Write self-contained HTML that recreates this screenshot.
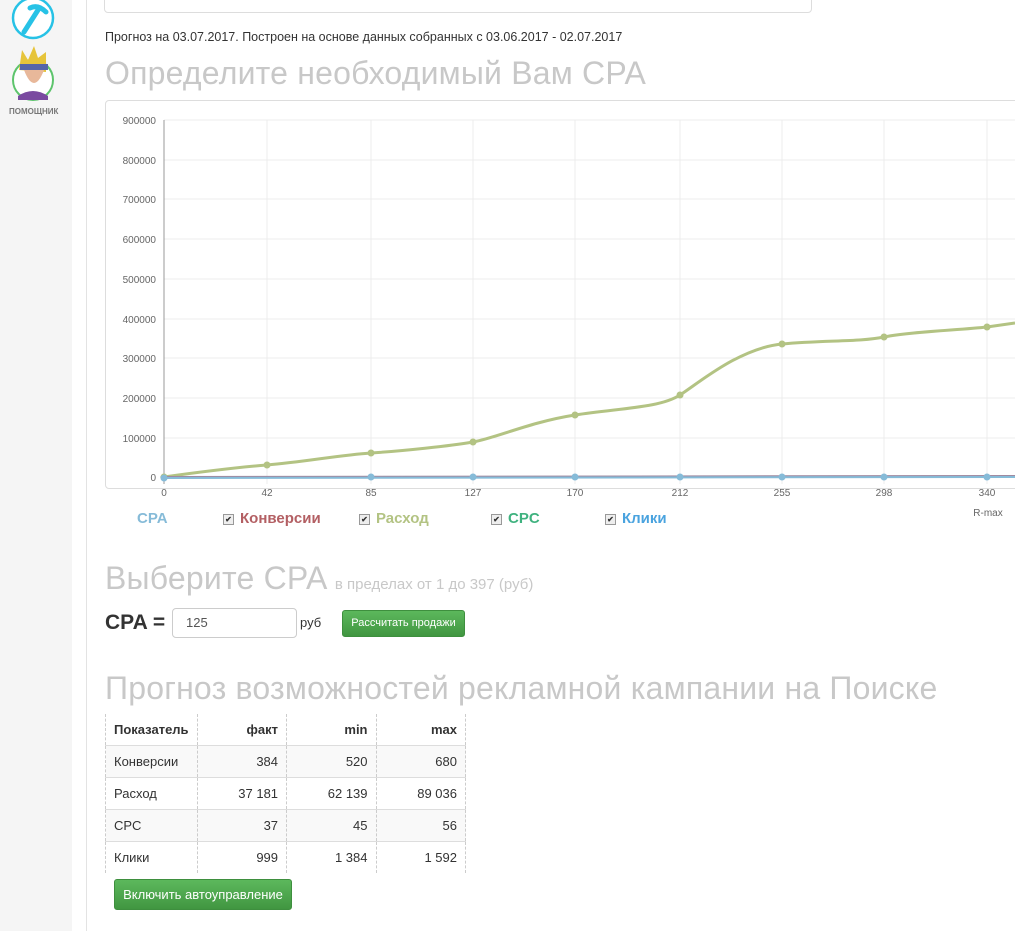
<!DOCTYPE html>
<html><head><meta charset="utf-8"><style>
body{margin:0;width:1015px;height:931px;overflow:hidden;background:#fff;font-family:"Liberation Sans",sans-serif;position:relative}
.sb{position:absolute;left:0;top:0;width:72px;height:931px;background:#f5f5f5}
.vl{position:absolute;left:86px;top:0;width:1px;height:931px;background:#e3e3e3}
.a{position:absolute}
h2{position:absolute;margin:0;font-weight:normal;color:#c8c8c8;white-space:nowrap;letter-spacing:0.2px}
table{border-collapse:collapse;font-size:13px;color:#333}
td,th{height:31px;padding:0 8px;border-left:1px dashed #ccc;border-right:1px dashed #ccc;border-top:1px solid #ddd;text-align:right}
th{border-top:none;height:31px}
td:first-child,th:first-child{text-align:left}
tr:nth-child(even) td{background:#f9f9f9}
.btn{position:absolute;background:linear-gradient(#5cb85c,#419641);border:1px solid #3e8f3e;border-radius:3px;color:#fff;text-align:center}
.cb{display:inline-block;width:9px;height:9px;border:1px solid #999;background:#eee;font-size:8px;line-height:9px;text-align:center;color:#333;vertical-align:1px;margin-right:6px}
</style></head><body>
<div class="sb"></div><div class="vl"></div>
<svg class="a" style="left:10px;top:0" width="50" height="120">
<circle cx="23" cy="18" r="20" fill="#fff" stroke="#27c2e6" stroke-width="2.5"/>
<path d="M14 32 L28 10" stroke="#27c2e6" stroke-width="5" stroke-linecap="round"/>
<path d="M20 8 Q28 4 36 12" stroke="#27c2e6" stroke-width="5" fill="none" stroke-linecap="round"/>
<circle cx="23" cy="80" r="20" fill="#fff" stroke="#5dc46c" stroke-width="2"/>
<path d="M9 70 L12 50 L18 60 L24 46 L28 58 L36 52 L36 72 Z" fill="#e6c43a"/>
<rect x="10" y="64" width="28" height="6" fill="#5565a8"/>
<path d="M14 70 Q24 96 34 70 Z" fill="#e8b89a"/>
<path d="M8 96 Q23 86 38 96 L38 100 L8 100Z" fill="#7a4aa0"/>
</svg>
<div class="a" style="left:9px;top:107px;font-size:8px;font-weight:bold;color:#777">ПОМОЩНИК</div>
<div class="a" style="left:104px;top:-5px;width:706px;height:16px;border:1px solid #ddd;border-radius:4px"></div>
<div class="a" style="left:105px;top:30px;font-size:12.5px;color:#333">Прогноз на 03.07.2017. Построен на основе данных собранных с 03.06.2017 - 02.07.2017</div>
<h2 style="left:105px;top:55px;font-size:32px">Определите необходимый Вам CPA</h2>
<div class="a" style="left:105px;top:100px;width:920px;height:387px;border:1px solid #ddd;border-radius:4px"></div>
<svg class="a" style="left:100px;top:100px" width="915" height="420" font-family="Liberation Sans" font-size="10" fill="#666">
<g stroke="#ececec">
<line x1="64" y1="20" x2="915" y2="20"/><line x1="64" y1="60" x2="915" y2="60"/><line x1="64" y1="99" x2="915" y2="99"/><line x1="64" y1="139" x2="915" y2="139"/><line x1="64" y1="179" x2="915" y2="179"/><line x1="64" y1="219" x2="915" y2="219"/><line x1="64" y1="258" x2="915" y2="258"/><line x1="64" y1="298" x2="915" y2="298"/><line x1="64" y1="338" x2="915" y2="338"/>
<line x1="167" y1="20" x2="167" y2="384"/><line x1="271" y1="20" x2="271" y2="384"/><line x1="373" y1="20" x2="373" y2="384"/><line x1="475" y1="20" x2="475" y2="384"/><line x1="580" y1="20" x2="580" y2="384"/><line x1="682" y1="20" x2="682" y2="384"/><line x1="784" y1="20" x2="784" y2="384"/><line x1="887" y1="20" x2="887" y2="384"/>
</g>
<line x1="64" y1="20" x2="64" y2="384" stroke="#999"/><line x1="60" y1="377" x2="915" y2="377" stroke="#ccc"/>
<g text-anchor="end"><text x="56" y="24">900000</text><text x="56" y="64">800000</text><text x="56" y="103">700000</text><text x="56" y="143">600000</text><text x="56" y="183">500000</text><text x="56" y="223">400000</text><text x="56" y="262">300000</text><text x="56" y="302">200000</text><text x="56" y="342">100000</text><text x="56" y="381">0</text></g>
<g text-anchor="middle"><text x="64" y="396">0</text><text x="167" y="396">42</text><text x="271" y="396">85</text><text x="373" y="396">127</text><text x="475" y="396">170</text><text x="580" y="396">212</text><text x="682" y="396">255</text><text x="784" y="396">298</text><text x="887" y="396">340</text><text x="888" y="416">R-max</text></g>
<path d="M64 377 C100 372,130 368,167 365 S240 355,271 353 S350 346,373 342 S430 322,475 315 S560 308,580 295 S640 248,682 244 S760 242,784 237 S860 230,887 227 L915 223" stroke="#b3c383" stroke-width="3" fill="none"/>
<g fill="#b3c383"><circle cx="64" cy="377" r="3.5"/><circle cx="167" cy="365" r="3.5"/><circle cx="271" cy="353" r="3.5"/><circle cx="373" cy="342" r="3.5"/><circle cx="475" cy="315" r="3.5"/><circle cx="580" cy="295" r="3.5"/><circle cx="682" cy="244" r="3.5"/><circle cx="784" cy="237" r="3.5"/><circle cx="887" cy="227" r="3.5"/></g>
<path d="M64 377 L915 376" stroke="#a08aa0" stroke-width="2"/>
<path d="M64 378 L915 377" stroke="#86bbd8" stroke-width="2"/>
<g fill="#86bbd8"><circle cx="64" cy="378" r="3.5"/><circle cx="271" cy="377" r="3.5"/><circle cx="373" cy="377" r="3.5"/><circle cx="475" cy="377" r="3.5"/><circle cx="580" cy="377" r="3.5"/><circle cx="682" cy="377" r="3.5"/><circle cx="784" cy="377" r="3.5"/><circle cx="887" cy="377" r="3.5"/></g>
</svg>
<div class="a" style="top:510px;left:137px;font-size:15px;font-weight:bold;white-space:nowrap">
<span style="color:#86bbd8">CPA</span>
<span style="position:absolute;left:86px;color:#b35f63"><span class="cb">✔</span>Конверсии</span>
<span style="position:absolute;left:222px;color:#b3c383"><span class="cb">✔</span>Расход</span>
<span style="position:absolute;left:354px;color:#3fb27f"><span class="cb">✔</span>CPC</span>
<span style="position:absolute;left:468px;color:#4aa3df"><span class="cb">✔</span>Клики</span>
</div>
<h2 style="left:105px;top:560px;font-size:32px">Выберите CPA <span style="font-size:15px;letter-spacing:0">в пределах от 1 до 397 (руб)</span></h2>
<div class="a" style="left:105px;top:611px;font-size:21px;font-weight:bold;color:#333">CPA =</div>
<div class="a" style="left:172px;top:608px;width:110px;height:28px;border:1px solid #ccc;border-radius:4px;padding-left:13px;font-size:13px;line-height:28px;color:#555">125</div>
<div class="a" style="left:300px;top:615px;font-size:13px;color:#333">руб</div>
<div class="btn" style="left:342px;top:610px;width:121px;height:25px;line-height:25px;font-size:11px">Рассчитать продажи</div>
<h2 style="left:105px;top:670px;font-size:32px">Прогноз возможностей рекламной кампании на Поиске</h2>
<table class="a" style="left:105px;top:714px;width:361px">
<tr><th style="width:74px">Показатель</th><th>факт</th><th>min</th><th>max</th></tr>
<tr><td>Конверсии</td><td>384</td><td>520</td><td>680</td></tr>
<tr><td>Расход</td><td>37 181</td><td>62 139</td><td>89 036</td></tr>
<tr><td>CPC</td><td>37</td><td>45</td><td>56</td></tr>
<tr><td>Клики</td><td>999</td><td>1 384</td><td>1 592</td></tr>
</table>
<div class="btn" style="left:114px;top:879px;width:176px;height:29px;line-height:29px;font-size:13px">Включить автоуправление</div>
</body></html>
